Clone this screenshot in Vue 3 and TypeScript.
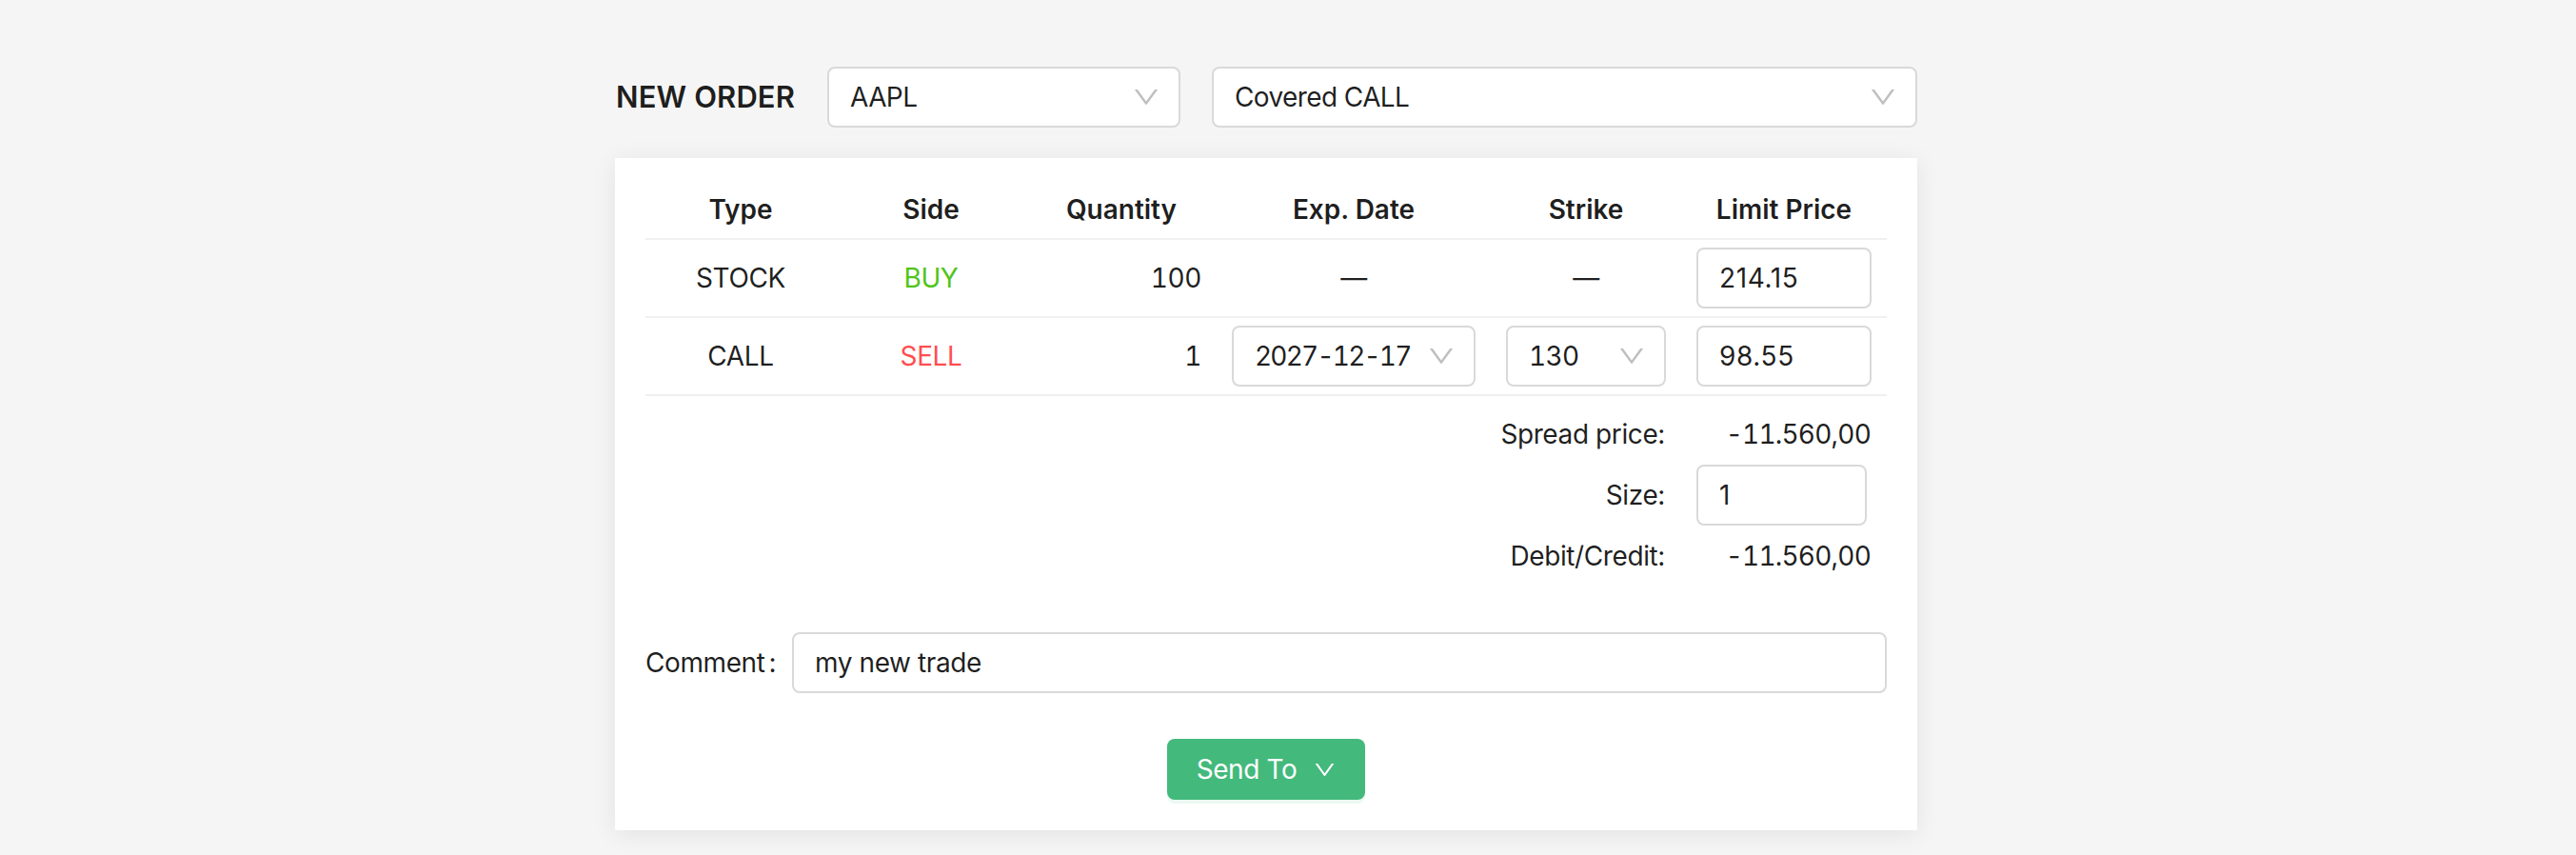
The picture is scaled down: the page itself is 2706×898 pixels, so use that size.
<template>
  <div class="page">
    <div class="order">
      <div class="toolbar">
        <h2 class="title">NEW ORDER</h2>
        <div class="select symbol">
          <span>AAPL</span>
          <svg class="arrow" viewBox="64 64 896 896"><path :d="downPath" /></svg>
        </div>
        <div class="select strategy">
          <span>Covered CALL</span>
          <svg class="arrow" viewBox="64 64 896 896"><path :d="downPath" /></svg>
        </div>
      </div>

      <div class="card">
        <table class="legs">
          <colgroup>
            <col v-for="w in colWidths" :key="w.name" :style="{ width: w.width + 'px' }" />
          </colgroup>
          <thead>
            <tr>
              <th>Type</th>
              <th>Side</th>
              <th>Quantity</th>
              <th>Exp. Date</th>
              <th>Strike</th>
              <th>Limit Price</th>
            </tr>
          </thead>
          <tbody>
            <tr>
              <td>STOCK</td>
              <td class="buy">BUY</td>
              <td class="qty num">100</td>
              <td>—</td>
              <td>—</td>
              <td><div class="input price">214.15</div></td>
            </tr>
            <tr>
              <td>CALL</td>
              <td class="sell">SELL</td>
              <td class="qty num">1</td>
              <td>
                <div class="select cell-select">
                  <span class="num date">2027-12-17</span>
                  <svg class="arrow" viewBox="64 64 896 896"><path :d="downPath" /></svg>
                </div>
              </td>
              <td>
                <div class="select cell-select">
                  <span class="num">130</span>
                  <svg class="arrow" viewBox="64 64 896 896"><path :d="downPath" /></svg>
                </div>
              </td>
              <td><div class="input price">98.55</div></td>
            </tr>
          </tbody>
        </table>

        <div class="summary">
          <label>Spread price:</label>
          <div class="value num">-11.560,00</div>
          <label>Size:</label>
          <div class="input size">1</div>
          <label>Debit/Credit:</label>
          <div class="value num">-11.560,00</div>
        </div>

        <div class="comment">
          <label>Comment<span class="colon">:</span></label>
          <div class="input grow">my new trade</div>
        </div>

        <div class="actions">
          <button class="send" type="button">
            Send To
            <svg class="send-arrow" viewBox="64 64 896 896"><path :d="downPath" /></svg>
          </button>
        </div>
      </div>
    </div>
  </div>
</template>

<script setup lang="ts">
const downPath =
  'M884 256h-75c-5.1 0-9.9 2.5-12.9 6.6L512 654.2 227.9 262.6c-3-4.1-7.8-6.6-12.9-6.6h-75c-6.5 0-10.3 7.4-6.5 12.7l352.6 486.1c12.8 17.6 39 17.6 51.7 0l352.6-486.1c3.9-5.3.1-12.7-6.4-12.7z'

const colWidths = [
  { name: 'type', width: 200 },
  { name: 'side', width: 200 },
  { name: 'quantity', width: 200 },
  { name: 'date', width: 288 },
  { name: 'strike', width: 200 },
  { name: 'limit', width: 216 }
]
</script>

<style>
html,
body {
  margin: 0;
  background: #f5f5f5;
}
</style>

<style scoped>
.page {
  min-height: 898px;
  background: #f5f5f5;
  display: flex;
  justify-content: center;
  font-family: Inter, "Noto Sans", sans-serif;
  font-size: 28px;
  line-height: 44px;
  letter-spacing: -0.4px;
  color: rgba(0, 0, 0, 0.88);
  box-sizing: border-box;
  padding: 70px 46px 0 0;
}

.order {
  width: 1368px;
}

.toolbar {
  display: flex;
  align-items: center;
  gap: 33px;
  margin-bottom: 32px;
}

.title {
  margin: 0;
  padding-left: 1px;
  width: 189px;
  font-size: 31px;
  font-weight: 600;
  letter-spacing: 0.1px;
  white-space: nowrap;
}

.select,
.input {
  box-sizing: border-box;
  height: 64px;
  background: #fff;
  border: 2px solid #d9d9d9;
  border-radius: 8px;
  display: flex;
  align-items: center;
  padding: 0 22px;
  text-align: left;
}

.select {
  justify-content: space-between;
  padding-right: 20px;
  letter-spacing: -0.6px;
}

.symbol {
  width: 371px;
}

.strategy {
  flex: 1;
}

.arrow {
  width: 28px;
  height: 28px;
  fill: #bfbfbf;
  flex: none;
}

.card {
  background: #fff;
  padding: 24px 32px 32px;
  box-shadow: 0 4px 24px rgba(0, 0, 0, 0.08);
}

.legs {
  width: 1304px;
  table-layout: fixed;
  border-collapse: collapse;
}

.legs th {
  height: 60px;
  padding: 0 16px;
  font-weight: 600;
  letter-spacing: 0;
  text-align: center;
  border-bottom: 2px solid #f0f0f0;
}

.legs td {
  height: 80px;
  padding: 0 16px;
  text-align: center;
  border-bottom: 2px solid #f0f0f0;
}

.legs td.qty {
  text-align: right;
}

.num {
  font-variant-numeric: tabular-nums;
}

.date {
  letter-spacing: -1.8px;
}

.price {
  letter-spacing: 0.6px;
}

.value {
  letter-spacing: -0.8px;
}

.buy {
  color: #52c41a;
}

.sell {
  color: #ff4d4f;
}

.summary {
  display: grid;
  grid-template-columns: 1fr 183px;
  grid-auto-rows: 64px;
  column-gap: 33px;
  align-items: center;
  padding: 8px 17px 0 0;
  text-align: right;
}

.size {
  width: 179px;
}

.comment {
  display: flex;
  align-items: center;
  margin-top: 48px;
}

.comment label {
  width: 154px;
  flex: none;
  white-space: nowrap;
}

.colon {
  margin-left: 4px;
}

.grow {
  flex: 1;
}

.actions {
  display: flex;
  justify-content: center;
  margin-top: 48px;
}

.send {
  box-sizing: border-box;
  width: 208px;
  height: 64px;
  padding: 0;
  border: none;
  border-radius: 8px;
  background: #43b97c;
  color: #fff;
  font: inherit;
  letter-spacing: inherit;
  box-shadow: 0 4px 0 rgba(67, 185, 124, 0.1);
  display: flex;
  align-items: center;
  justify-content: center;
  gap: 18px;
}

.send-arrow {
  width: 23px;
  height: 23px;
  fill: #fff;
}
</style>
